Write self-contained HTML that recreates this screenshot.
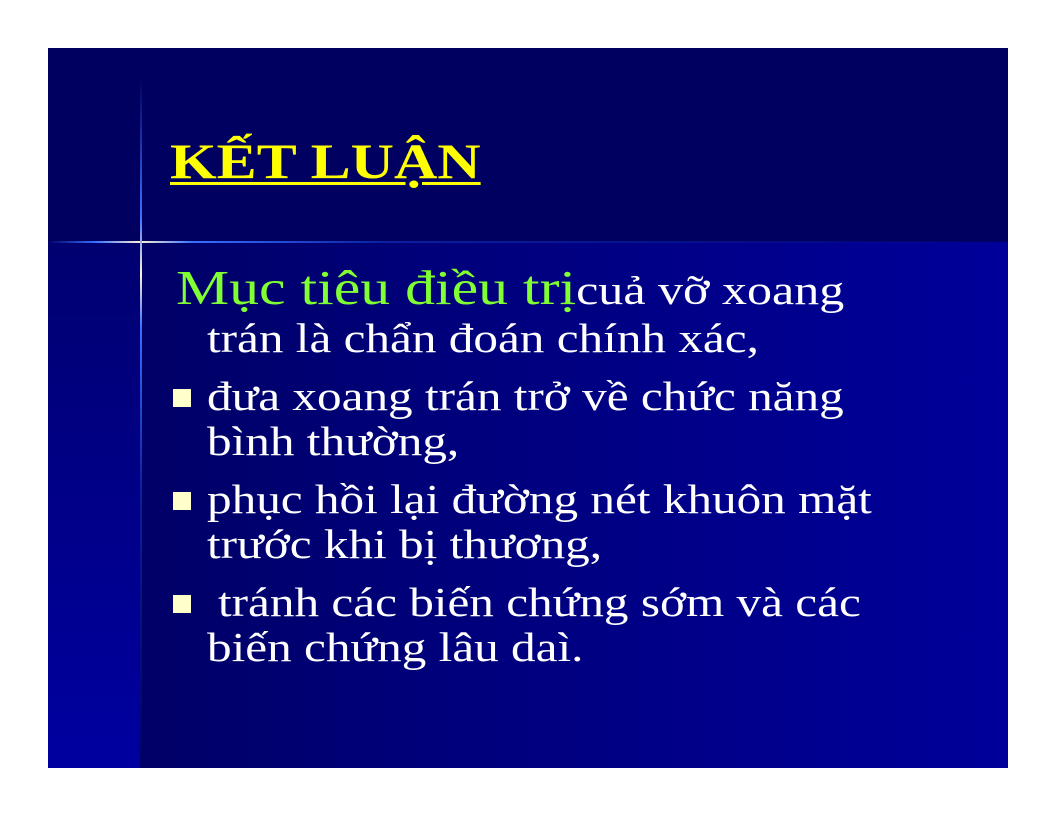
<!DOCTYPE html>
<html><head><meta charset="utf-8"><style>
body{margin:0;width:1056px;height:816px;background:#fff;position:relative;overflow:hidden;font-family:"Liberation Serif",serif}
.s{position:absolute;left:48px;top:48px;width:960px;height:720px;background:#000060;overflow:hidden}
.low{position:absolute;left:0;top:194px;width:960px;height:526px;background:linear-gradient(90deg,#000060 0%,#00007a 40%,#00009a 100%)}
.strip{position:absolute;left:0;top:194px;width:92px;height:526px;background:linear-gradient(180deg,#000070,#0000a0)}
.hl{position:absolute;left:0;top:193px;width:960px;height:2px;background:linear-gradient(90deg,rgba(40,90,255,0) 0%,#3a70ff 5%,#fff4d0 9.6%,#3a70ff 15%,#0a20a0 35%,rgba(0,0,150,0) 100%)}
.vl{position:absolute;left:92px;top:30px;width:2px;height:690px;background:linear-gradient(180deg,rgba(0,0,150,0) 0%,#3a70ff 20%,#fff4d0 28.5%,#3a70ff 36%,#0a20a0 60%,rgba(0,0,150,0) 100%)}
.t{position:absolute;white-space:nowrap;color:#fff;font-size:41px;line-height:1;transform:scaleX(1.2);transform-origin:0 0}
.b{position:absolute;width:18px;height:18px;background:#ffffcc}
</style></head><body>
<div class="s">
<div class="low"></div><div class="strip"></div><div class="hl"></div><div class="vl"></div>
</div>
<div class="t" style="left:170px;top:136px;color:#ffff00;font-weight:bold;font-size:50px;text-decoration:underline;text-decoration-thickness:3px;text-underline-offset:4px">KẾT LUẬN</div>
<div class="t" style="left:176px;top:263px;transform:scaleX(1.22)"><span style="color:#80ff33;font-size:49px">Mục tiêu điều trị</span>cuả vỡ xoang</div>
<div class="t" style="left:207px;top:318px">trán là chẩn đoán chính xác,</div>
<div class="b" style="left:173px;top:389px"></div>
<div class="t" style="left:207px;top:376px">đưa xoang trán trở về chức năng</div>
<div class="t" style="left:207px;top:421px">bình thường,</div>
<div class="b" style="left:173px;top:492px"></div>
<div class="t" style="left:207px;top:479px">phục hồi lại đường nét khuôn mặt</div>
<div class="t" style="left:207px;top:524px">trước khi bị thương,</div>
<div class="b" style="left:173px;top:595px"></div>
<div class="t" style="left:218px;top:582px">tránh các biến chứng sớm và các</div>
<div class="t" style="left:207px;top:627px">biến chứng lâu daì.</div>
</body></html>
